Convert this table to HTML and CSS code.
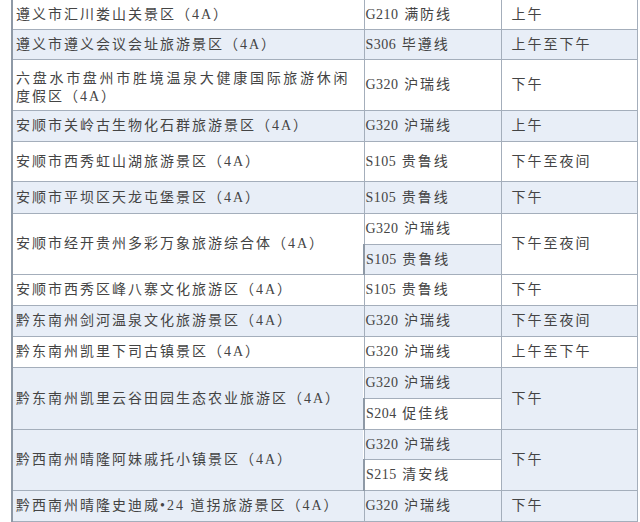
FILE: index.html
```html
<!DOCTYPE html>
<html lang="zh-CN">
<head>
<meta charset="utf-8">
<title>景区线路表</title>
<link rel="stylesheet" href="styles.css">
</head>
<body>
<table class="tbl">
  <colgroup>
    <col class="c1">
    <col class="c2">
    <col class="c3">
  </colgroup>
  <tbody>
    <tr class="h30"><td class="name">遵义市汇川娄山关景区（4A）</td><td class="road"><span class="code">G210</span> 满防线</td><td class="time">上午</td></tr>
    <tr class="h30"><td class="name">遵义市遵义会议会址旅游景区（4A）</td><td class="road"><span class="code">S306</span> 毕遵线</td><td class="time">上午至下午</td></tr>
    <tr class="h51"><td class="name wrap">六盘水市盘州市胜境温泉大健康国际旅游休闲度假区（4A）</td><td class="road"><span class="code">G320</span> 沪瑞线</td><td class="time">下午</td></tr>
    <tr class="h31"><td class="name">安顺市关岭古生物化石群旅游景区（4A）</td><td class="road"><span class="code">G320</span> 沪瑞线</td><td class="time">上午</td></tr>
    <tr class="h40"><td class="name">安顺市西秀虹山湖旅游景区（4A）</td><td class="road"><span class="code">S105</span> 贵鲁线</td><td class="time">下午至夜间</td></tr>
    <tr class="h32"><td class="name">安顺市平坝区天龙屯堡景区（4A）</td><td class="road"><span class="code">S105</span> 贵鲁线</td><td class="time">下午</td></tr>
    <tr class="h31"><td class="name" rowspan="2">安顺市经开贵州多彩万象旅游综合体（4A）</td><td class="road"><span class="code">G320</span> 沪瑞线</td><td class="time" rowspan="2">下午至夜间</td></tr>
    <tr class="h30"><td class="road"><span class="code">S105</span> 贵鲁线</td></tr>
    <tr class="h31"><td class="name">安顺市西秀区峰八寨文化旅游区（4A）</td><td class="road"><span class="code">S105</span> 贵鲁线</td><td class="time">下午</td></tr>
    <tr class="h31"><td class="name">黔东南州剑河温泉文化旅游景区（4A）</td><td class="road"><span class="code">G320</span> 沪瑞线</td><td class="time">下午至夜间</td></tr>
    <tr class="h31"><td class="name">黔东南州凯里下司古镇景区（4A）</td><td class="road"><span class="code">G320</span> 沪瑞线</td><td class="time">上午至下午</td></tr>
    <tr class="h31"><td class="name" rowspan="2">黔东南州凯里云谷田园生态农业旅游区（4A）</td><td class="road"><span class="code">G320</span> 沪瑞线</td><td class="time" rowspan="2">下午</td></tr>
    <tr class="h31"><td class="road"><span class="code">S204</span> 促佳线</td></tr>
    <tr class="h30"><td class="name" rowspan="2">黔西南州晴隆阿妹戚托小镇景区（4A）</td><td class="road"><span class="code">G320</span> 沪瑞线</td><td class="time" rowspan="2">下午</td></tr>
    <tr class="h31"><td class="road"><span class="code">S215</span> 清安线</td></tr>
    <tr class="h31"><td class="name">黔西南州晴隆史迪威•24 道拐旅游景区（4A）</td><td class="road"><span class="code">G320</span> 沪瑞线</td><td class="time">下午</td></tr>
  </tbody>
</table>
</body>
</html>
```
FILE: styles.css
```css
html, body {
  margin: 0;
  padding: 0;
  background: #ffffff;
}

body {
  font-family: "Liberation Serif", "Noto Sans CJK SC", serif;
  font-size: 14px;
  color: #444444;
}

.tbl {
  border-collapse: collapse;
  table-layout: fixed;
  width: 625px;
  margin: -1px 0 0 11px;
  border-left: 2px solid #8e99a6;
  border-right: 1px solid #98a2ae;
}

.c1 { width: 352px; }
.c2 { width: 137px; }
.c3 { width: 136px; }

.tbl td {
  border: 1px solid #a4aebb;
  padding: 0;
  vertical-align: middle;
  letter-spacing: 2px;
  line-height: 18px;
  white-space: nowrap;
  overflow: hidden;
}

.tbl td:first-child {
  border-left: 2px solid #8e99a6;
}

.tbl tr:nth-child(even) {
  background: #e8eef7;
}

.name {
  padding-left: 3px !important;
}

.name.wrap {
  white-space: normal;
  text-align: justify;
  padding-right: 14px !important;
  padding-top: 5px !important;
}

.road {
  padding-left: 1px !important;
}

.code {
  letter-spacing: 0.5px;
}

.time {
  padding-left: 10px !important;
}

.h30 { height: 30px; }
.h31 { height: 31px; }
.h32 { height: 32px; }
.h40 { height: 40px; }
.h51 { height: 51px; }
```
